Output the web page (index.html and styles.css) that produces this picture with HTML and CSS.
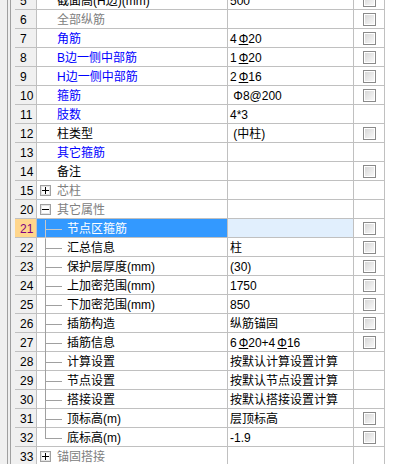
FILE: index.html
```html
<!DOCTYPE html>
<html>
<head>
<meta charset="utf-8">
<link rel="stylesheet" href="styles.css">
</head>
<body>
<div class="page">
  <div class="gutter"><div class="rails"></div></div>
  <div class="grid">
    <div class="row"><div class="num">5</div><div class="name">截面高(H边)(mm)</div><div class="val">500</div><div class="chk"><span class="cb"></span></div></div>
    <div class="row"><div class="num">6</div><div class="name gray">全部纵筋</div><div class="val"></div><div class="chk"><span class="cb"></span></div></div>
    <div class="row"><div class="num">7</div><div class="name blue">角筋</div><div class="val">4<span class="hrb">Φ</span>20</div><div class="chk"><span class="cb"></span></div></div>
    <div class="row"><div class="num">8</div><div class="name blue">B边一侧中部筋</div><div class="val">1<span class="hrb">Φ</span>20</div><div class="chk"><span class="cb"></span></div></div>
    <div class="row"><div class="num">9</div><div class="name blue">H边一侧中部筋</div><div class="val">2<span class="hrb">Φ</span>16</div><div class="chk"><span class="cb"></span></div></div>
    <div class="row"><div class="num">10</div><div class="name blue">箍筋</div><div class="val">&nbsp;Φ8@200</div><div class="chk"><span class="cb"></span></div></div>
    <div class="row"><div class="num">11</div><div class="name blue">肢数</div><div class="val">4*3</div><div class="chk"></div></div>
    <div class="row"><div class="num">12</div><div class="name">柱类型</div><div class="val">&nbsp;(中柱)</div><div class="chk"><span class="cb"></span></div></div>
    <div class="row"><div class="num">13</div><div class="name blue">其它箍筋</div><div class="val"></div><div class="chk"></div></div>
    <div class="row"><div class="num">14</div><div class="name">备注</div><div class="val"></div><div class="chk"><span class="cb"></span></div></div>
    <div class="row"><div class="num">15</div><div class="name group gray"><span class="tog plus"></span>芯柱</div><div class="val"></div><div class="chk"></div></div>
    <div class="row"><div class="num">20</div><div class="name group gray"><span class="tog minus open"></span>其它属性</div><div class="val"></div><div class="chk"></div></div>
    <div class="row sel"><div class="num">21</div><div class="name child"><span class="branch"></span>节点区箍筋</div><div class="val"></div><div class="chk"><span class="cb"></span></div></div>
    <div class="row"><div class="num">22</div><div class="name child"><span class="branch"></span>汇总信息</div><div class="val">柱</div><div class="chk"><span class="cb"></span></div></div>
    <div class="row"><div class="num">23</div><div class="name child"><span class="branch"></span>保护层厚度(mm)</div><div class="val">(30)</div><div class="chk"><span class="cb"></span></div></div>
    <div class="row"><div class="num">24</div><div class="name child"><span class="branch"></span>上加密范围(mm)</div><div class="val">1750</div><div class="chk"><span class="cb"></span></div></div>
    <div class="row"><div class="num">25</div><div class="name child"><span class="branch"></span>下加密范围(mm)</div><div class="val">850</div><div class="chk"><span class="cb"></span></div></div>
    <div class="row"><div class="num">26</div><div class="name child"><span class="branch"></span>插筋构造</div><div class="val">纵筋锚固</div><div class="chk"><span class="cb"></span></div></div>
    <div class="row"><div class="num">27</div><div class="name child"><span class="branch"></span>插筋信息</div><div class="val">6<span class="hrb">Φ</span>20+4<span class="hrb">Φ</span>16</div><div class="chk"><span class="cb"></span></div></div>
    <div class="row"><div class="num">28</div><div class="name child"><span class="branch"></span>计算设置</div><div class="val">按默认计算设置计算</div><div class="chk"></div></div>
    <div class="row"><div class="num">29</div><div class="name child"><span class="branch"></span>节点设置</div><div class="val">按默认节点设置计算</div><div class="chk"></div></div>
    <div class="row"><div class="num">30</div><div class="name child"><span class="branch"></span>搭接设置</div><div class="val">按默认搭接设置计算</div><div class="chk"></div></div>
    <div class="row"><div class="num">31</div><div class="name child"><span class="branch"></span>顶标高(m)</div><div class="val">层顶标高</div><div class="chk"><span class="cb"></span></div></div>
    <div class="row"><div class="num">32</div><div class="name child"><span class="branch last"></span>底标高(m)</div><div class="val">-1.9</div><div class="chk"><span class="cb"></span></div></div>
    <div class="row"><div class="num">33</div><div class="name group gray"><span class="tog plus"></span>锚固搭接</div><div class="val"></div><div class="chk"></div></div>
  </div>
</div>
</body>
</html>
```

FILE: styles.css
```css
html, body {
  margin: 0;
  padding: 0;
  background: #ffffff;
}
body {
  width: 400px;
  height: 464px;
  overflow: hidden;
  font-family: "Liberation Sans", "Noto Sans CJK SC", sans-serif;
  font-size: 12px;
  color: #000000;
}
.page {
  display: flex;
  margin-top: -9px;
}
.gutter {
  width: 15px;
  flex: none;
  background: #f0f0f0;
  padding-left: 7px;
  box-sizing: border-box;
  display: flex;
}
.rails {
  width: 4px;
  box-sizing: border-box;
  border-left: 1px solid #a0a0a0;
  border-right: 1px solid #a0a0a0;
}
.grid {
  display: flex;
  flex-direction: column;
  width: 370px;
}
.row {
  display: flex;
  height: 19px;
}
.row > div {
  box-sizing: border-box;
  height: 19px;
  border-right: 1px solid #c0c0c0;
  border-bottom: 1px solid #c0c0c0;
  display: flex;
  align-items: center;
  white-space: nowrap;
  line-height: 18px;
}
.num {
  width: 22px;
  background: #f0f0f0;
  padding-left: 5px;
  padding-top: 1px;
}
.name {
  width: 191px;
  padding-left: 20px;
  padding-top: 1px;
}
.val {
  width: 126px;
  padding-left: 2px;
  padding-top: 1px;
}
.chk {
  width: 31px;
  justify-content: center;
  padding-top: 1px;
}
.blue { color: #0000ff; }
.gray { color: #808080; }

.hrb {
  text-decoration: underline;
  text-underline-offset: 1px;
  margin-left: 2px;
}

.cb {
  display: block;
  width: 13px;
  height: 13px;
  box-sizing: border-box;
  border: 1px solid #8a8a8a;
  box-shadow: inset 0 0 0 1px #ffffff;
  background: linear-gradient(135deg, #d4d4d4 0%, #ececec 60%, #fafafa 100%);
}

.name.group {
  padding-left: 3px;
}
.tog {
  display: block;
  flex: none;
  width: 11px;
  height: 11px;
  box-sizing: border-box;
  border: 1px solid #a0a0a0;
  box-shadow: inset 0 0 0 1px #e4e4e4;
  margin-right: 6px;
  background-color: #ffffff;
}
.tog.plus {
  background-image:
    linear-gradient(#000, #000),
    linear-gradient(#000, #000);
  background-size: 7px 1px, 1px 7px;
  background-position: center, center;
  background-repeat: no-repeat;
}
.tog.minus {
  background-image: linear-gradient(#000, #000);
  background-size: 7px 1px;
  background-position: center;
  background-repeat: no-repeat;
}

.name.child {
  padding-left: 8px;
}
.branch {
  display: block;
  flex: none;
  width: 17px;
  height: 19px;
  align-self: flex-start;
  margin-right: 5px;
  background-image:
    linear-gradient(#a0a0a0, #a0a0a0),
    linear-gradient(#a0a0a0, #a0a0a0);
  background-size: 1px 100%, 100% 1px;
  background-position: left top, left 9px;
  background-repeat: no-repeat;
}
.branch.last {
  background-size: 1px 10px, 100% 1px;
}

.sel .num {
  background: #ffd68c;
  color: #800080;
}
.sel .name {
  background: #3399ff;
  color: #ffffff;
}
.sel .branch {
  background-image:
    linear-gradient(#c8c8c8, #c8c8c8),
    linear-gradient(#c8c8c8, #c8c8c8);
}
.sel .val {
  background: #e1effd;
}
```
